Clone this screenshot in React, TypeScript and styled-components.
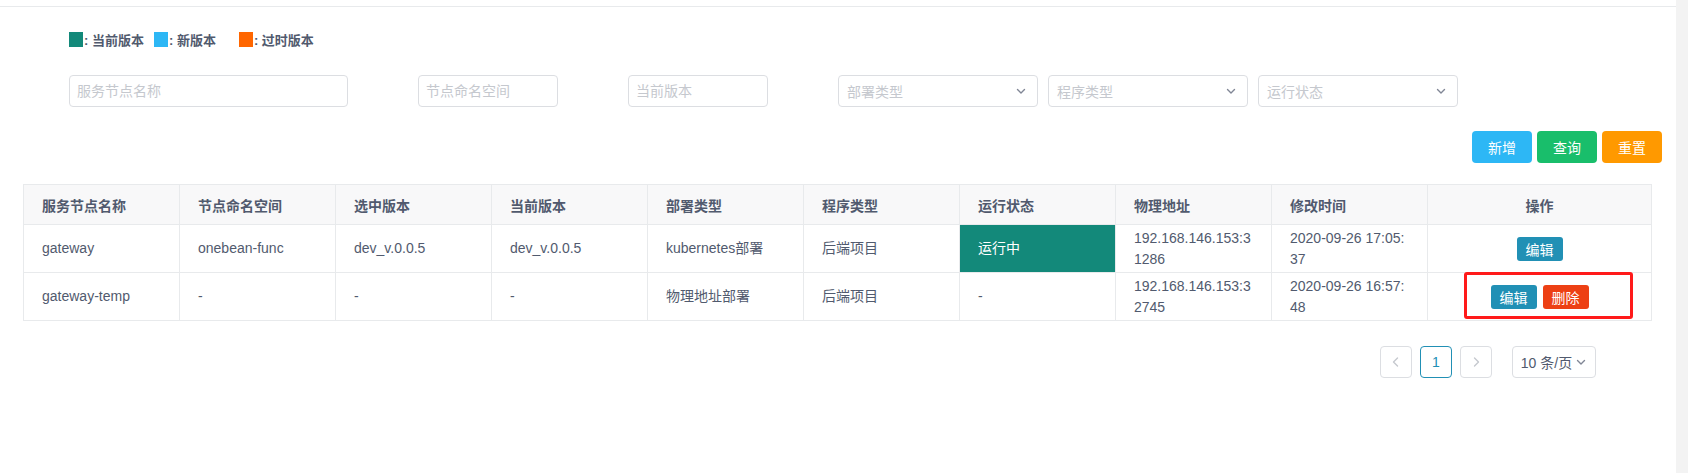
import React from "react";
import styled, { createGlobalStyle } from "styled-components";

const GlobalStyle = createGlobalStyle`
  html, body {
    margin: 0;
    padding: 0;
    background: #fff;
    font-family: "Liberation Sans", "Noto Sans CJK SC", sans-serif;
    color: #515a6e;
  }
`;

const TEAL = "#13897a";
const PRIMARY = "#2190b5";

type Row = {
  name: string;
  namespace: string;
  selected: string;
  current: string;
  deploy: string;
  program: string;
  running: boolean;
  address: string;
  time: string;
  canDelete: boolean;
};

const rows: Row[] = [
  {
    name: "gateway",
    namespace: "onebean-func",
    selected: "dev_v.0.0.5",
    current: "dev_v.0.0.5",
    deploy: "kubernetes部署",
    program: "后端项目",
    running: true,
    address: "192.168.146.153:31286",
    time: "2020-09-26 17:05:37",
    canDelete: false,
  },
  {
    name: "gateway-temp",
    namespace: "-",
    selected: "-",
    current: "-",
    deploy: "物理地址部署",
    program: "后端项目",
    running: false,
    address: "192.168.146.153:32745",
    time: "2020-09-26 16:57:48",
    canDelete: true,
  },
];

const columns = [
  "服务节点名称",
  "节点命名空间",
  "选中版本",
  "当前版本",
  "部署类型",
  "程序类型",
  "运行状态",
  "物理地址",
  "修改时间",
];

const Chevron = ({ dir = "down", color = "#808695" }: { dir?: "down" | "left" | "right"; color?: string }) => {
  const d =
    dir === "down" ? "M2.5 4.5 L6 8 L9.5 4.5" : dir === "left" ? "M7.5 2 L3.5 6 L7.5 10" : "M4.5 2 L8.5 6 L4.5 10";
  return (
    <svg width="12" height="12" viewBox="0 0 12 12">
      <path d={d} fill="none" stroke={color} strokeWidth="1.4" strokeLinecap="round" strokeLinejoin="round" />
    </svg>
  );
};

export default function App() {
  return (
    <>
      <GlobalStyle />
      <Page>
        <Main>
          <Legend>
            <LegendItem $gap={10}>
              <Swatch $color={TEAL} />
              <LegendText>: 当前版本</LegendText>
            </LegendItem>
            <LegendItem $gap={23}>
              <Swatch $color="#2db7f5" />
              <LegendText>: 新版本</LegendText>
            </LegendItem>
            <LegendItem $gap={0}>
              <Swatch $color="#ff6600" />
              <LegendText>: 过时版本</LegendText>
            </LegendItem>
          </Legend>

          <Filters>
            <TextInput $width={279} placeholder="服务节点名称" />
            <TextInput $width={140} placeholder="节点命名空间" />
            <TextInput $width={140} placeholder="当前版本" />
            <Selects>
              <SelectBox>
                <span>部署类型</span>
                <Chevron />
              </SelectBox>
              <SelectBox>
                <span>程序类型</span>
                <Chevron />
              </SelectBox>
              <SelectBox>
                <span>运行状态</span>
                <Chevron />
              </SelectBox>
            </Selects>
          </Filters>

          <Toolbar>
            <ActionButton $bg="#2db7f5">新增</ActionButton>
            <ActionButton $bg="#19be6b">查询</ActionButton>
            <ActionButton $bg="#ff9900">重置</ActionButton>
          </Toolbar>

          <Table>
            <colgroup>
              {columns.map((c) => (
                <col key={c} style={{ width: 156 }} />
              ))}
              <col />
            </colgroup>
            <thead>
              <tr>
                {columns.map((c) => (
                  <Th key={c}>{c}</Th>
                ))}
                <Th $center>操作</Th>
              </tr>
            </thead>
            <tbody>
              {rows.map((r) => (
                <tr key={r.name}>
                  <Td>{r.name}</Td>
                  <Td>{r.namespace}</Td>
                  <Td>{r.selected}</Td>
                  <Td>{r.current}</Td>
                  <Td>{r.deploy}</Td>
                  <Td>{r.program}</Td>
                  <Td $status={r.running}>{r.running ? "运行中" : "-"}</Td>
                  <Td>{r.address}</Td>
                  <Td>{r.time}</Td>
                  <ActionCell>
                    <SmallButton $bg={PRIMARY}>编辑</SmallButton>
                    {r.canDelete && <SmallButton $bg="#ed4014">删除</SmallButton>}
                    {r.canDelete && <Highlight />}
                  </ActionCell>
                </tr>
              ))}
            </tbody>
          </Table>

          <Pager>
            <PageItem>
              <Chevron dir="left" color="#c5c8ce" />
            </PageItem>
            <PageItem $active>1</PageItem>
            <PageItem>
              <Chevron dir="right" color="#c5c8ce" />
            </PageItem>
            <SizeSelect>
              10 条/页
              <Chevron />
            </SizeSelect>
          </Pager>
        </Main>
        <ScrollTrack />
      </Page>
    </>
  );
}

const Page = styled.div`
  display: flex;
  min-height: 473px;
`;

const Main = styled.div`
  flex: 1;
  margin-top: 6px;
  border-top: 1px solid #e8eaec;
  padding: 0 24px 0 23px;
`;

const ScrollTrack = styled.div`
  width: 12px;
  background: #f3f3f3;
`;

const Legend = styled.div`
  display: flex;
  align-items: center;
  margin: 25px 0 0 46px;
  height: 15px;
`;

const LegendItem = styled.div<{ $gap: number }>`
  display: flex;
  align-items: center;
  margin-right: ${(p) => p.$gap}px;
`;

const Swatch = styled.span<{ $color: string }>`
  display: inline-block;
  width: 14px;
  height: 15px;
  background: ${(p) => p.$color};
`;

const LegendText = styled.span`
  font-size: 13px;
  font-weight: bold;
  color: #515a6e;
  margin-left: 1px;
  white-space: pre;
`;

const Filters = styled.div`
  display: flex;
  align-items: center;
  margin: 28px 0 0 46px;
  height: 32px;
`;

const TextInput = styled.input<{ $width: number }>`
  box-sizing: border-box;
  width: ${(p) => p.$width}px;
  height: 32px;
  margin-right: 70px;
  padding: 0 7px;
  border: 1px solid #dcdee2;
  border-radius: 4px;
  font-family: inherit;
  font-size: 14px;
  outline: none;
  &::placeholder {
    color: #c5c8ce;
  }
`;

const Selects = styled.div`
  display: flex;
  gap: 10px;
`;

const SelectBox = styled.div`
  box-sizing: border-box;
  width: 200px;
  height: 32px;
  display: flex;
  align-items: center;
  justify-content: space-between;
  padding: 0 10px 0 8px;
  border: 1px solid #dcdee2;
  border-radius: 4px;
  font-size: 14px;
  color: #c5c8ce;
`;

const Toolbar = styled.div`
  display: flex;
  justify-content: flex-end;
  gap: 5px;
  margin: 24px -10px 0 0;
`;

const ActionButton = styled.button<{ $bg: string }>`
  width: 60px;
  height: 32px;
  border: none;
  border-radius: 4px;
  background: ${(p) => p.$bg};
  color: #fff;
  font-family: inherit;
  font-size: 14px;
  cursor: pointer;
`;

const Table = styled.table`
  width: 100%;
  margin-top: 21px;
  border-collapse: collapse;
  table-layout: fixed;
  border: 1px solid #dcdee2;
  font-size: 14px;
`;

const Th = styled.th<{ $center?: boolean }>`
  height: 39px;
  padding: 0 18px;
  background: #f8f8f9;
  border: 1px solid #e8eaec;
  text-align: ${(p) => (p.$center ? "center" : "left")};
  font-weight: bold;
  color: #515a6e;
`;

const Td = styled.td<{ $status?: boolean }>`
  height: 47px;
  padding: 0 18px;
  border: 1px solid #e8eaec;
  line-height: 21px;
  color: ${(p) => (p.$status ? "#fff" : "#515a6e")};
  background: ${(p) => (p.$status ? TEAL : "#fff")};
  word-break: break-all;
`;

const ActionCell = styled.td`
  position: relative;
  height: 47px;
  padding: 0;
  border: 1px solid #e8eaec;
  text-align: center;
  & > button + button {
    margin-left: 6px;
  }
`;

const SmallButton = styled.button<{ $bg: string }>`
  height: 24px;
  padding: 0 9px;
  border: none;
  border-radius: 3px;
  background: ${(p) => p.$bg};
  color: #fff;
  font-family: inherit;
  font-size: 14px;
  vertical-align: middle;
`;

const Highlight = styled.span`
  position: absolute;
  left: 36px;
  top: -1px;
  width: 169px;
  height: 47px;
  box-sizing: border-box;
  border: 3px solid #ff1a1a;
  border-radius: 3px;
  pointer-events: none;
`;

const Pager = styled.div`
  display: flex;
  justify-content: flex-end;
  align-items: center;
  gap: 8px;
  margin-top: 25px;
  padding-right: 56px;
`;

const PageItem = styled.div<{ $active?: boolean }>`
  box-sizing: border-box;
  width: 32px;
  height: 32px;
  display: flex;
  align-items: center;
  justify-content: center;
  border: 1px solid ${(p) => (p.$active ? PRIMARY : "#dcdee2")};
  border-radius: 4px;
  color: ${(p) => (p.$active ? PRIMARY : "#515a6e")};
  font-size: 14px;
`;

const SizeSelect = styled.div`
  box-sizing: border-box;
  margin-left: 12px;
  width: 84px;
  height: 32px;
  display: flex;
  align-items: center;
  justify-content: center;
  gap: 3px;
  border: 1px solid #dcdee2;
  border-radius: 4px;
  font-size: 14px;
  color: #515a6e;
`;
